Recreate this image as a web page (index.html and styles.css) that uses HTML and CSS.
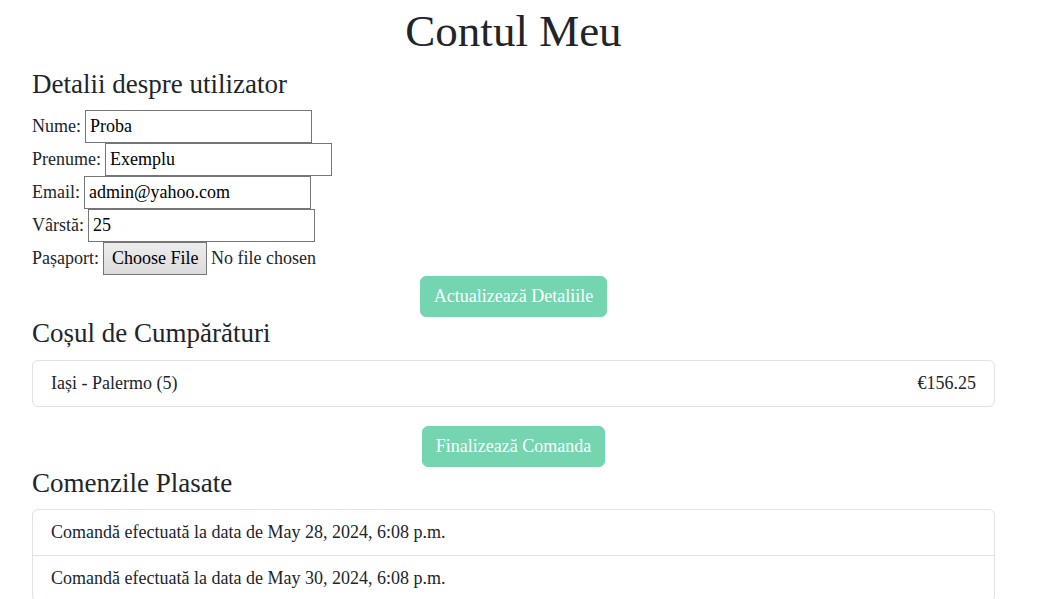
FILE: index.html
```html
<!DOCTYPE html>
<html lang="ro">
<head>
<meta charset="utf-8">
<title>Contul Meu</title>
<link rel="stylesheet" href="styles.css">
</head>
<body>
<main class="page">
  <h1 class="title">Contul Meu</h1>

  <h2 class="section-title section-first">Detalii despre utilizator</h2>
  <form class="details">
    <div class="row"><label>Nume:</label> <input class="field" type="text" value="Proba"></div>
    <div class="row"><label>Prenume:</label> <input class="field" type="text" value="Exemplu"></div>
    <div class="row"><label>Email:</label> <input class="field" type="text" value="admin@yahoo.com"></div>
    <div class="row"><label>Vârstă:</label> <input class="field" type="text" value="25"></div>
    <div class="row"><label>Pașaport:</label> <span class="file"><span class="file-btn">Choose File</span> No file chosen</span></div>
    <div class="actions"><button type="button" class="btn">Actualizează Detaliile</button></div>
  </form>

  <h2 class="section-title">Coșul de Cumpărături</h2>
  <ul class="list">
    <li class="item item-split"><span>Iași - Palermo (5)</span><span>€156.25</span></li>
  </ul>
  <div class="actions actions-cart"><button type="button" class="btn">Finalizează Comanda</button></div>

  <h2 class="section-title">Comenzile Plasate</h2>
  <ul class="list">
    <li class="item">Comandă efectuată la data de May 28, 2024, 6:08 p.m.</li>
    <li class="item">Comandă efectuată la data de May 30, 2024, 6:08 p.m.</li>
  </ul>
</main>
</body>
</html>
```

FILE: styles.css
```css
* { box-sizing: border-box; }
html, body { margin: 0; padding: 0; background: #fff; }
body {
  font-family: "Liberation Serif", "Times New Roman", serif;
  font-size: 18px;
  line-height: 1.5;
  color: #212529;
  overflow: hidden;
}
.page {
  padding: 0 49px 0 32px;
}
.title {
  margin: 0;
  padding-top: 4px;
  font-size: 45px;
  font-weight: 400;
  line-height: 1.2;
  text-align: center;
}
.section-title {
  margin: 0 0 10px;
  font-size: 27px;
  font-weight: 400;
  line-height: 1.2;
}
.section-first { margin: 10px 0 8px; }
.details { margin: 0; padding-top: 2px; }
.row {
  display: flex;
  align-items: center;
  height: 33px;
  gap: 4px;
  white-space: pre;
}
.field {
  width: 227px;
  height: 33px;
  border: 1px solid #767676;
  border-radius: 0;
  padding: 0 4px;
  font: inherit;
  color: #000;
  background: #fff;
}
.file { display: flex; align-items: center; }
.file-btn {
  display: inline-flex;
  align-items: center;
  height: 33px;
  padding: 0 7px 0 8px;
  border: 1px solid #767676;
  background: linear-gradient(#ececec, #dcdcdc);
  color: #000;
}
.actions {
  display: flex;
  justify-content: center;
  padding-top: 1px;
}
.btn {
  font: inherit;
  line-height: 27px;
  padding: 6px 13px;
  border: 1px solid #75d5b0;
  border-radius: 6px;
  background: #75d5b0;
  color: #fff;
}
.list {
  list-style: none;
  margin: 0;
  padding: 0;
  border: 1px solid #dfe2e6;
  border-radius: 6px;
}
.item {
  padding: 9px 18px;
  line-height: 27px;
}
.item + .item { border-top: 1px solid #dfe2e6; }
.item-split {
  display: flex;
  justify-content: space-between;
}
.actions-cart { margin-top: 18px; }
```
